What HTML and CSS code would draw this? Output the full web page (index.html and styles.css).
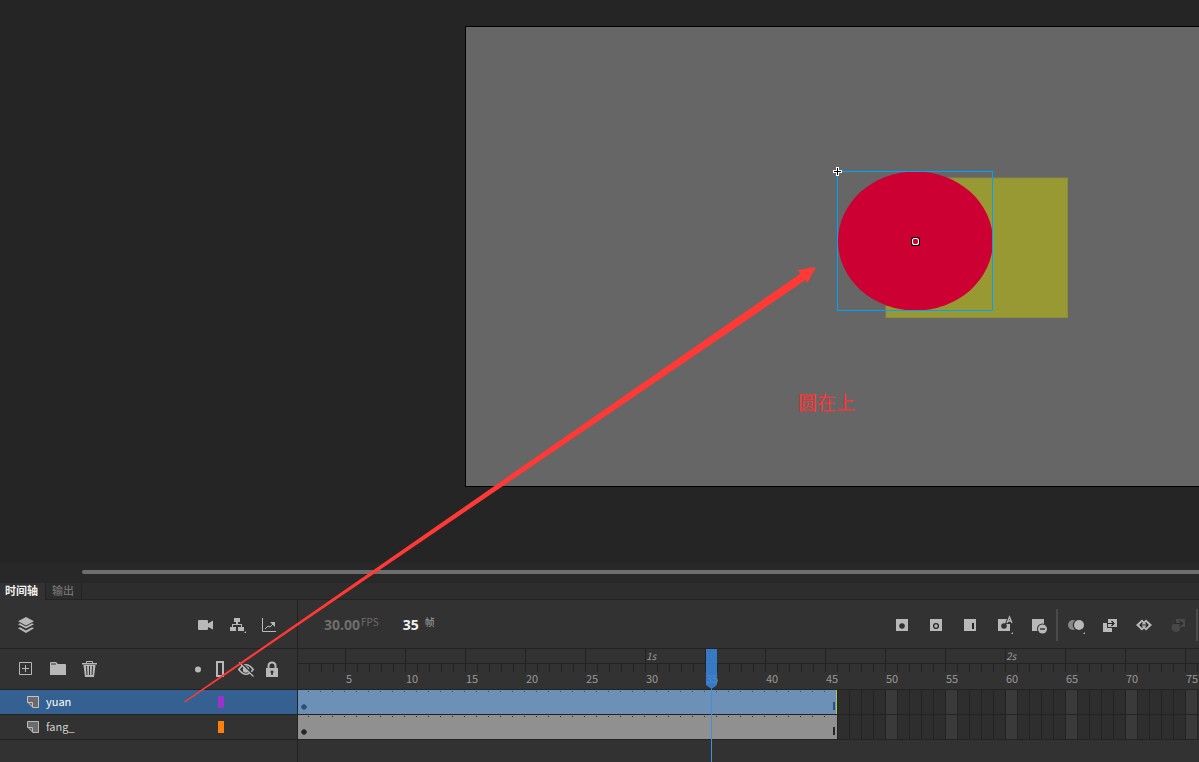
FILE: index.html
```html
<!DOCTYPE html>
<html lang="zh-CN">
<head>
<meta charset="utf-8">
<title>时间轴</title>
<link rel="stylesheet" href="styles.css">
</head>
<body>
<main class="workspace">
  <div class="pasteboard">
    <div class="stage">
      <svg class="artwork" aria-hidden="true">
        <rect x="420" y="151" width="181.500" height="139.500" fill="#999933" stroke="#8b8b3a"/>
        <ellipse cx="449.5" cy="214" rx="77.5" ry="69.5" fill="#cc0033"/>
        <rect x="371.5" y="144.5" width="155" height="139" fill="none" stroke="#00a2ff"/>
        <g shape-rendering="crispEdges">
          <path d="M367 143h3v-3h3v3h3v3h-3v3h-3v-3h-3z" fill="#fff"/>
          <path d="M368 144h3v-3h1v3h3v1h-3v3h-1v-3h-3z" fill="#000"/>
        </g>
        <rect x="445" y="210" width="9" height="9" rx="2.5" fill="#000"/>
        <rect x="446.500" y="211.500" width="6" height="6" rx="2" fill="#cc0033" stroke="#fff" stroke-width="1.1"/>
      </svg>
      <p class="note">圆在上</p>
    </div>
  </div>
  <div class="scroll-strip"><div class="scroll-thumb"></div></div>
</main>

<section class="timeline">
  <nav class="tabs">
    <button class="tab tab-active">时间轴</button>
    <button class="tab">输出</button>
  </nav>
  <div class="timeline-body">
    <div class="layers">
      <div class="toolbar layer-toolbar">
        <button class="tool" aria-label="图层"><svg viewBox="0 0 16 16"><path d="M8 0l8 4.2-8 4.2L0 4.200z"/><path d="M0 7.200l2-1 6 3.200 6-3.200 2 1-8 4.300zM0 11.300l2-1 6 3.200 6-3.200 2 1L8 16z"/></svg></button>
        <span class="spacer"></span>
        <button class="tool" aria-label="摄像头"><svg viewBox="0 0 16 16"><path d="M0 4a1 1 0 0 1 1-1h8a1 1 0 0 1 1 1v2.500L15 3.500v9L10 10v2a1 1 0 0 1-1 1H1a1 1 0 0 1-1-1z"/></svg></button>
        <button class="tool" aria-label="父级"><svg viewBox="0 0 16 16"><path d="M4 1h6v4H8v2h4v3h2v4H8v-4h3V8H3v2h3v4H0v-4h2V7h4V5H4zM16 14v2h-2z"/></svg></button>
        <button class="tool" aria-label="图表"><svg viewBox="0 0 16 16"><path d="M.5 1v13.500H14M3 12l3-3 2 1 4-4" fill="none" stroke="currentColor"/><path d="M8 5h5v5z"/></svg></button>
      </div>
      <div class="header layer-header">
        <button class="tool" aria-label="新建图层"><svg viewBox="0 0 16 16"><path d="M1.500 1.500h12v12h-12zM7.500 4v7M4 7.500h7" fill="none" stroke="currentColor"/></svg></button>
        <button class="tool" aria-label="新建文件夹"><svg viewBox="0 0 16 16"><path d="M0 2q0-1 1-1h5l2 2h7q1 0 1 1v10H0z"/><path d="M1 3h5" stroke="#323232"/></svg></button>
        <button class="tool" aria-label="删除"><svg viewBox="0 0 16 16"><path d="M0 2h15v1.500H0zM1.500 4h12l-1.500 12H3z"/><path d="M4.500 2V.5h6V2" fill="none" stroke="currentColor"/><path d="M4.500 5l.5 9M7.500 5v9M10.500 5l-.5 9" stroke="#323232" fill="none"/></svg></button>
        <span class="spacer"></span>
        <button class="tool" aria-label="突出显示"><svg viewBox="0 0 16 16"><circle cx="12" cy="8.500" r="3"/></svg></button>
        <button class="tool" aria-label="轮廓"><svg viewBox="0 0 16 16"><path d="M5 1h6v14H5z" fill="none" stroke="currentColor" stroke-width="2"/></svg></button>
        <button class="tool" aria-label="隐藏"><svg viewBox="0 0 16 16"><path d="M.8 8.500Q8-1 15.200 8.500Q8 18 .8 8.500z" fill="none" stroke="currentColor" stroke-width="1.600"/><circle cx="8" cy="8.500" r="3.200"/><path d="M2 1l14 14" stroke="#323232" stroke-width="2"/><path d="M1 1.500l14.500 14" stroke="currentColor" stroke-width="1.300"/></svg></button>
        <button class="tool" aria-label="锁定"><svg viewBox="0 0 16 16"><path d="M4.500 8V5Q4.500 1.500 8 1.500T11.500 5v3" fill="none" stroke="currentColor" stroke-width="2"/><path d="M2 7h12v9H2z"/><path d="M8 9.500a1.500 1.500 0 0 1 .8 2.800V14H7.200v-1.700A1.500 1.500 0 0 1 8 9.500z" fill="#323232"/></svg></button>
      </div>
      <div class="layer layer-selected">
        <svg class="layer-icon" viewBox="0 0 12 12"><path d="M.5.500h11v11H6L.5 6z" fill="#6b6b6b" stroke="#c4c4c4"/><path d="M.5 6.500h5v5" fill="none" stroke="#c4c4c4"/></svg>
        <span class="layer-name">yuan</span>
        <span class="swatch swatch-purple"></span>
      </div>
      <div class="layer">
        <svg class="layer-icon" viewBox="0 0 12 12"><path d="M.5.500h11v11H6L.5 6z" fill="#6b6b6b" stroke="#b8b8b8"/><path d="M.5 6.500h5v5" fill="none" stroke="#b8b8b8"/></svg>
        <span class="layer-name">fang_</span>
        <span class="swatch swatch-orange"></span>
      </div>
    </div>

    <div class="frames">
      <div class="toolbar frame-toolbar">
        <span class="fps">30.00</span><span class="unit">FPS</span>
        <span class="current">35</span><span class="unit unit-frame">帧</span>
        <span class="spacer"></span>
        <div class="tool-group">
          <button class="tool tool-wide" aria-label="关键帧"><svg viewBox="0 0 18 16"><path d="M0 2h12v12H0z"/><circle cx="6" cy="9" r="2.800" fill="#323232"/></svg></button>
          <button class="tool tool-wide" aria-label="空白关键帧"><svg viewBox="0 0 18 16"><path d="M0 2h12v12H0z"/><circle cx="6" cy="9" r="2.400" fill="none" stroke="#262626" stroke-width="1.300"/></svg></button>
          <button class="tool tool-wide" aria-label="帧"><svg viewBox="0 0 18 16"><path d="M0 2h12v12H0z"/><path d="M8 6h2v6H8z" fill="#222"/></svg></button>
          <button class="tool tool-wide" aria-label="自动关键帧"><svg viewBox="0 0 18 16"><path d="M0 2h12v12H0z"/><path d="M7 7L10-1h3l3 8h-4z" fill="#323232"/><circle cx="6" cy="9" r="2.800" fill="#323232"/><path d="M9 6L11.500 0 14 6M10 4h3" fill="none" stroke="currentColor" stroke-width="1.300"/><path d="M15 15v2h-2z"/></svg></button>
          <button class="tool tool-wide" aria-label="删除帧"><svg viewBox="0 0 18 16"><path d="M0 2h12v12H0z"/><circle cx="10.500" cy="12" r="5.500" fill="#323232"/><circle cx="10.500" cy="12" r="4.500"/><path d="M8 12h5" stroke="#222" stroke-width="1.300"/></svg></button>
        </div>
        <span class="divider"></span>
        <div class="tool-group">
          <button class="tool tool-wide" aria-label="绘图纸外观"><svg viewBox="0 0 18 16"><circle cx="5" cy="8" r="5" fill="#888"/><circle cx="10.500" cy="8" r="5.800" fill="#323232"/><circle cx="11" cy="8" r="5"/><path d="M17 15v2h-2z"/></svg></button>
          <button class="tool tool-wide" aria-label="传统补间"><svg viewBox="0 0 18 16"><path d="M1 6h9v9H1z"/><path d="M5 1h11v10H5z" fill="#323232"/><path d="M6 2h9v8H6z"/><path d="M1 6h4v5h5v4H1z"/><path d="M5 6.500h7M9.500 4l2.500 2.500L9.500 9" fill="none" stroke="#222" stroke-width="1.200"/></svg></button>
          <button class="tool tool-wide" aria-label="补间动画"><svg viewBox="0 0 18 16"><path d="M0 8l6-5.500 2 2 2-2L16 8l-6 5.500-2-2-2 2z"/><path d="M4 8h8M6.500 5.500L4 8l2.500 2.500M9.500 5.500L12 8l-2.500 2.500" fill="none" stroke="#222" stroke-width="1.100"/></svg></button>
          <button class="tool tool-wide tool-disabled" disabled aria-label="形状补间"><svg viewBox="0 0 18 16"><circle cx="6" cy="10.500" r="4.500"/><path d="M6 2h9v8H6z"/><path d="M4 6.500h8M9.500 4l3 2.500-3 2.500" fill="none" stroke="#2b2b2b" stroke-width="1.200"/></svg></button>
        </div>
        <span class="divider divider-end"></span>
      </div>
      <div class="header ruler">
        <div class="ruler-row seconds"><span></span><span></span><span></span><span></span><span></span><i>1s</i><span></span><span></span><span></span><span></span><span></span><i>2s</i></div>
        <div class="ruler-row numbers"><span>5</span><span>10</span><span>15</span><span>20</span><span>25</span><span>30</span><span>35</span><span>40</span><span>45</span><span>50</span><span>55</span><span>60</span><span>65</span><span>70</span><span>75</span></div>
      </div>
      <div class="track"><div class="span span-selected"></div></div>
      <div class="track"><div class="span"></div></div>
      <div class="playhead"><div class="playhead-grip"></div></div>
    </div>
  </div>
</section>

<svg class="arrow" aria-hidden="true"><path d="M184 701.500L800.300 273.700 797.700 270 816 267 807.300 283 805.500 280 185 702.500z" fill="#ff3a36"/></svg>
</body>
</html>
```
FILE: styles.css
```css
* { box-sizing: border-box; }

body {
  margin: 0;
  min-height: 100vh;
  display: flex;
  flex-direction: column;
  position: relative;
  overflow: hidden;
  background: #323232;
  color: #b8b8b8;
  font: 11px/16px "Noto Sans CJK SC", sans-serif;
}

button {
  margin: 0;
  padding: 0;
  border: 0;
  background: none;
  color: inherit;
  font: inherit;
}

.workspace {
  flex: 1;
  display: flex;
  flex-direction: column;
  background: #252525;
}

.pasteboard {
  flex: 1;
  display: flex;
  padding: 26px 0 76px 465px;
}

.stage {
  flex: 1;
  position: relative;
  background: #666;
  border: 1px solid #000;
  border-right: 0;
}

.artwork {
  display: block;
  position: absolute;
  inset: 0;
  width: 100%;
  height: 100%;
}

.note {
  position: absolute;
  left: 332px;
  top: 363px;
  margin: 0;
  color: #f33;
  font-size: 19px;
  font-weight: 400;
  line-height: 24px;
}

.scroll-strip {
  padding: 7px 0 9px 82px;
  background: #282828;
}

.scroll-thumb {
  height: 4px;
  border-radius: 2px 0 0 2px;
  background: #6e6e6e;
}

.timeline { background: #323232; }

.tabs {
  display: flex;
  height: 17px;
  background: #2d2d2d;
  border-bottom: 1px solid #232323;
}

.tab {
  height: 16px;
  padding: 0 7px 2px 6px;
  border-right: 1px solid #232323;
  color: #737373;
  font-weight: 500;
  line-height: 14px;
}

.tab-active {
  height: 17px;
  padding: 0 7px 3px 5px;
  background: #323232;
  color: #f0f0f0;
  font-weight: 700;
}

.timeline-body { display: flex; }

.layers {
  flex: none;
  width: 298px;
  border-right: 1px solid #232323;
}

.frames {
  flex: 1;
  min-width: 0;
  position: relative;
  overflow: hidden;
  padding-bottom: 22px;
}

.toolbar {
  display: flex;
  align-items: center;
  height: 49px;
  border-bottom: 1px solid #232323;
}

.header {
  height: 41px;
  border-bottom: 1px solid #232323;
}

.layer-toolbar {
  gap: 16px;
  padding: 2px 19px 0 18px;
}

.layer-header {
  display: flex;
  align-items: center;
  gap: 10px;
  padding: 0 17px 0 18px;
}

.layer-header .tool:nth-child(-n+2) { margin-right: 6px; }

.spacer { flex: 1; }

.tool {
  display: block;
  width: 16px;
  height: 16px;
}

.tool svg {
  display: block;
  width: 100%;
  height: 100%;
  fill: currentColor;
  overflow: visible;
}

.tool-wide { width: 18px; }
.tool-disabled { color: #484848; }

.tool-group {
  display: flex;
  gap: 16px;
}

.divider {
  width: 2px;
  height: 32px;
  margin: 0 10px 0 6px;
  background: #4a4a4a;
}

.divider-end { margin: 0 1px 0 8px; }

.layer {
  display: flex;
  align-items: center;
  height: 25px;
  padding: 0 73px 0 27px;
  border-bottom: 1px solid #232323;
  color: #d0d0d0;
}

.layer-selected {
  background: #346191;
  color: #fff;
}

.layer-icon {
  width: 12px;
  height: 12px;
  margin-right: 7px;
}

.layer-name {
  flex: 1;
  padding-bottom: 2px;
}

.swatch {
  width: 6px;
  height: 12px;
}

.swatch-purple { background: #9933cc; }
.swatch-orange { background: #ff800d; }

.frame-toolbar {
  padding: 2px 0 0 26px;
  font-family: "Noto Sans", "Noto Sans CJK SC", sans-serif;
}

.fps {
  color: #6e6e6e;
  font-size: 14px;
  font-weight: 700;
}

.unit {
  align-self: flex-start;
  margin: 12px 24px 0 1px;
  color: #6e6e6e;
  font: 10px/16px "Noto Sans CJK SC", sans-serif;
}

.current {
  color: #f0f0f0;
  font-size: 14px;
  font-weight: 700;
}

.unit-frame {
  margin-left: 6px;
  color: #a0a0a0;
}

.ruler {
  background:
    repeating-linear-gradient(90deg, transparent 0 47px, #232323 47px 48px, transparent 48px 60px) 0 0 / 100% 23px no-repeat,
    repeating-linear-gradient(90deg, transparent 0 11px, #232323 11px 12px) 0 15px / 100% 8px no-repeat,
    linear-gradient(#232323, #232323) 0 14px / 100% 1px no-repeat;
}

.ruler-row {
  display: grid;
  grid-auto-flow: column;
  grid-auto-columns: 60px;
  justify-content: start;
  padding-left: 48px;
  color: #999;
  font-size: 11px;
}

.seconds {
  height: 21px;
  font-size: 10px;
  line-height: 14px;
}

.track {
  height: 25px;
  border-bottom: 1px solid #232323;
  background:
    repeating-linear-gradient(90deg, transparent 0 11px, #232323 11px 12px),
    repeating-linear-gradient(90deg, #2e2e2e 0 48px, #3a3a3a 48px 60px);
}

.span {
  position: relative;
  width: 539px;
  height: 24px;
  background: #909090;
  color: #262626;
}

.span::before {
  content: "";
  position: absolute;
  inset: 0 11px 0 0;
  background:
    radial-gradient(circle 3px at 6px 17px, currentColor 80%, transparent),
    repeating-linear-gradient(90deg, transparent 0 10px, currentColor 10px 11px, transparent 11px 12px) 0 1px / 100% 1px no-repeat;
}

.span::after {
  content: "";
  position: absolute;
  right: 2px;
  bottom: 4px;
  width: 2px;
  height: 8px;
  background: currentColor;
}

.span-selected {
  background: #6c90b6;
  border-right: 1px solid #a8cf45;
  color: #2b5179;
}

.span-selected::before { right: 10px; }
.span-selected::after { right: 1px; }

.playhead {
  position: absolute;
  left: 408px;
  top: 49px;
  bottom: 0;
  width: 11px;
  background: linear-gradient(#3f8ee0, #3f8ee0) 5px 40px / 1px 100% no-repeat;
}

.playhead-grip {
  height: 40px;
  background: rgba(56, 134, 220, 0.85);
  clip-path: polygon(0 0, 100% 0, 100% 36px, 50% 40px, 0 36px);
}

.arrow {
  position: absolute;
  inset: 0;
  width: 100%;
  height: 100%;
  pointer-events: none;
}
```
